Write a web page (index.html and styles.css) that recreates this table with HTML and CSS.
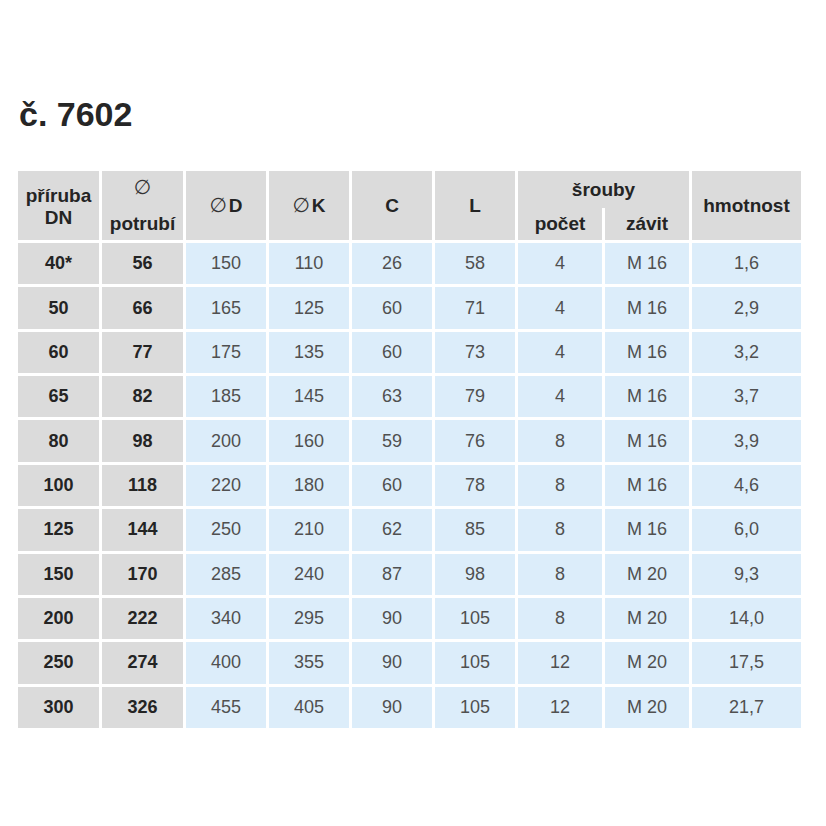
FILE: index.html
```html
<!DOCTYPE html>
<html lang="cs">
<head>
<meta charset="utf-8">
<title>č. 7602</title>
<link rel="stylesheet" href="styles.css">
</head>
<body>
<h1 class="title">č. 7602</h1>
<div class="table">
  <div class="h h-two"><span>příruba</span><span>DN</span></div>
  <div class="h h-pipe"><span class="dia">∅</span><span>potrubí</span></div>
  <div class="h"><span><span class="dia">∅</span>D</span></div>
  <div class="h"><span><span class="dia">∅</span>K</span></div>
  <div class="h">C</div>
  <div class="h">L</div>
  <div class="bolts">
    <div class="bolts-top">šrouby</div>
    <div class="bolts-sub">počet</div>
    <div class="bolts-sub">závit</div>
  </div>
  <div class="h">hmotnost</div>

  <div class="k">40*</div><div class="k">56</div><div class="d">150</div><div class="d">110</div><div class="d">26</div><div class="d">58</div><div class="d">4</div><div class="d">M 16</div><div class="d">1,6</div>
  <div class="k">50</div><div class="k">66</div><div class="d">165</div><div class="d">125</div><div class="d">60</div><div class="d">71</div><div class="d">4</div><div class="d">M 16</div><div class="d">2,9</div>
  <div class="k">60</div><div class="k">77</div><div class="d">175</div><div class="d">135</div><div class="d">60</div><div class="d">73</div><div class="d">4</div><div class="d">M 16</div><div class="d">3,2</div>
  <div class="k">65</div><div class="k">82</div><div class="d">185</div><div class="d">145</div><div class="d">63</div><div class="d">79</div><div class="d">4</div><div class="d">M 16</div><div class="d">3,7</div>
  <div class="k">80</div><div class="k">98</div><div class="d">200</div><div class="d">160</div><div class="d">59</div><div class="d">76</div><div class="d">8</div><div class="d">M 16</div><div class="d">3,9</div>
  <div class="k">100</div><div class="k">118</div><div class="d">220</div><div class="d">180</div><div class="d">60</div><div class="d">78</div><div class="d">8</div><div class="d">M 16</div><div class="d">4,6</div>
  <div class="k">125</div><div class="k">144</div><div class="d">250</div><div class="d">210</div><div class="d">62</div><div class="d">85</div><div class="d">8</div><div class="d">M 16</div><div class="d">6,0</div>
  <div class="k">150</div><div class="k">170</div><div class="d">285</div><div class="d">240</div><div class="d">87</div><div class="d">98</div><div class="d">8</div><div class="d">M 20</div><div class="d">9,3</div>
  <div class="k">200</div><div class="k">222</div><div class="d">340</div><div class="d">295</div><div class="d">90</div><div class="d">105</div><div class="d">8</div><div class="d">M 20</div><div class="d">14,0</div>
  <div class="k">250</div><div class="k">274</div><div class="d">400</div><div class="d">355</div><div class="d">90</div><div class="d">105</div><div class="d">12</div><div class="d">M 20</div><div class="d">17,5</div>
  <div class="k">300</div><div class="k">326</div><div class="d">455</div><div class="d">405</div><div class="d">90</div><div class="d">105</div><div class="d">12</div><div class="d">M 20</div><div class="d">21,7</div>
</div>
</body>
</html>
```
FILE: styles.css
```css
html, body {
  margin: 0;
  padding: 0;
  background: #ffffff;
}
body {
  font-family: "Liberation Sans", Arial, sans-serif;
  color: #222222;
  padding: 0 0 0 18px;
}
.title {
  margin: 0 0 37px 0;
  padding: 94px 0 0 1px;
  font-size: 34px;
  line-height: 40px;
  font-weight: bold;
  color: #262626;
}
.table {
  display: grid;
  grid-template-columns: 81px 81px 80px 80px 80px 80px 84px 84px 109px;
  grid-template-rows: 69px repeat(11, 1fr);
  column-gap: 3px;
  row-gap: 3px;
  height: 557px;
  width: 783px;
}
.h, .k, .bolts-top, .bolts-sub {
  background: #dbdbdb;
  font-weight: bold;
  color: #242424;
}
.h {
  display: flex;
  flex-direction: column;
  align-items: center;
  justify-content: center;
  font-size: 19px;
  line-height: 22px;
}
.h-two {
  padding-top: 2px;
  box-sizing: border-box;
}
.h-pipe {
  justify-content: space-between;
  padding: 6px 0 5px;
  box-sizing: border-box;
}
.dia {
  font-family: "DejaVu Sans", sans-serif;
  font-weight: normal;
  font-size: 20px;
  color: #333;
  margin-right: 2px;
}
.h-pipe .dia {
  margin-right: 0;
  line-height: 20px;
}
.bolts {
  grid-column: 7 / 9;
  display: grid;
  grid-template-columns: 84px 84px;
  grid-template-rows: 37px 32px;
  column-gap: 3px;
}
.bolts-top {
  grid-column: 1 / 3;
  display: flex;
  align-items: center;
  justify-content: center;
  font-size: 19px;
  line-height: 22px;
}
.bolts-sub {
  display: flex;
  align-items: flex-start;
  justify-content: center;
  font-size: 19px;
  line-height: 22px;
  padding-top: 5px;
  box-sizing: border-box;
}
.k, .d {
  display: flex;
  align-items: center;
  justify-content: center;
  font-size: 18px;
}
.d {
  background: #dcedfa;
  color: #505050;
  font-weight: normal;
}
```
